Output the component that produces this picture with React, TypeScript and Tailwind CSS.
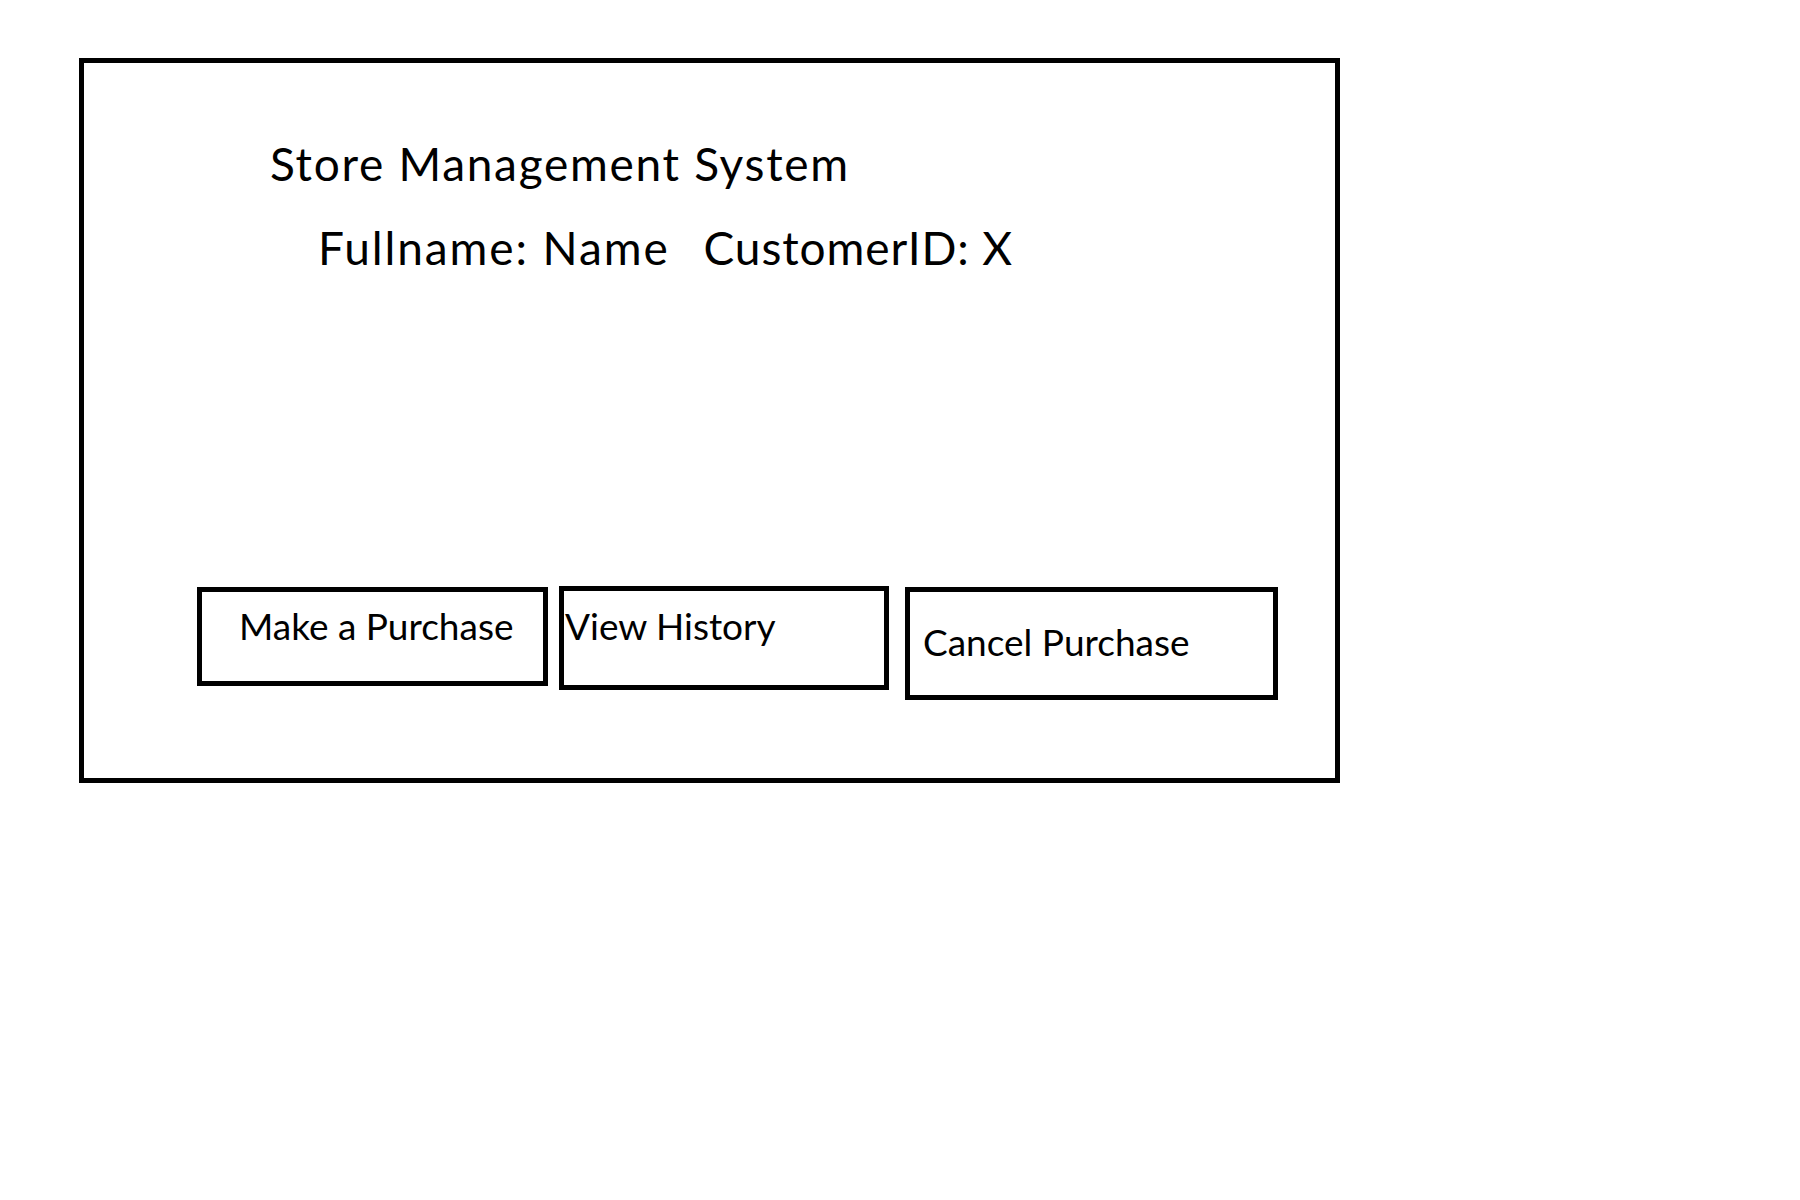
export default function App() {
  return (
    <div className="min-h-screen bg-white text-black" style={{ fontFamily: 'Lato, "Open Sans", sans-serif' }}>
      <div className="pt-[58px] pl-[79px]">
        <div className="w-[1261px] h-[725px] border-[5px] border-black flex flex-col">
          <h1 className="ml-[186px] mt-[78px] text-[46px] leading-none font-normal tracking-[1.7px]">Store Management System</h1>
          <p className="ml-[234px] mt-[38px] text-[46px] leading-none">
            <span className="tracking-[1.9px]">Fullname: Name</span>
            <span className="ml-[34px] tracking-[0.9px]">CustomerID: X</span>
          </p>
          <div className="ml-[113px] mt-[315px] flex items-start">
            <div className="w-[351px] h-[99px] border-[5px] border-black mt-[1px] pt-[15px] pl-[37px] text-[37px] leading-none">
              Make a Purchase
            </div>
            <div className="w-[330px] h-[104px] border-[5px] border-black ml-[11px] pt-[16px] pl-[1px] text-[37px] leading-none">
              View History
            </div>
            <div className="w-[373px] h-[113px] border-[5px] border-black ml-[16px] mt-[1px] pt-[31px] pl-[13px] text-[37px] leading-none">
              Cancel Purchase
            </div>
          </div>
        </div>
      </div>
    </div>
  )
}
